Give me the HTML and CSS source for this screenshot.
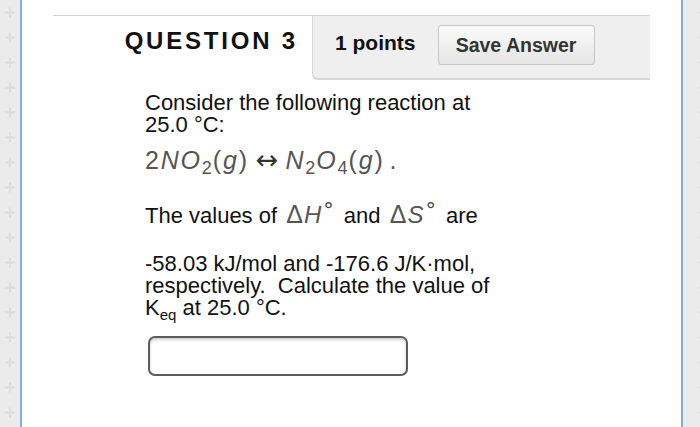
FILE: index.html
```html
<!DOCTYPE html>
<html lang="en">
<head>
<meta charset="utf-8">
<title>Question 3</title>
<link rel="stylesheet" href="styles.css">
</head>
<body>
<div class="page">
  <aside class="rail rail-left">
    <svg class="rail-marks" width="20" height="427" viewBox="0 0 20 427" aria-hidden="true">
      <defs>
        <pattern id="plus" x="0" y="0" width="20" height="25" patternUnits="userSpaceOnUse">
          <path d="M5 12.5h10M10 7.5v10" stroke="#dcdcdc" stroke-width="2" fill="none"/>
        </pattern>
      </defs>
      <rect width="20" height="427" fill="url(#plus)"/>
    </svg>
  </aside>
  <main class="content">
    <header class="qhead">
      <h2 class="qtitle">QUESTION 3</h2>
      <div class="qmeta">
        <span class="points">1 points</span>
        <button class="save" type="button">Save Answer</button>
      </div>
    </header>
    <section class="qbody">
      <p class="intro">Consider the following reaction at<br>25.0 °C:</p>
      <p class="eq"><span class="up">2</span><i>NO</i><sub>2</sub><span class="up">(</span><i>g</i><span class="up">)</span><span class="arrow">↔</span><i>N</i><sub>2</sub><i>O</i><sub>4</sub><span class="up">(</span><i>g</i><span class="up">)</span><span class="up dot">.</span></p>
      <p class="thermo">The values of <span class="m"><span class="delta">Δ</span><i>H</i><sup>°</sup></span> and <span class="m"><span class="delta">Δ</span><i>S</i><sup>°</sup></span> are</p>
      <p class="task">-58.03 kJ/mol and -176.6 J/K·mol,<br>respectively.&nbsp; Calculate the value of<br>K<sub class="keq">eq</sub> at 25.0 °C.</p>
      <input class="answer" type="text" aria-label="Answer">
    </section>
  </main>
  <aside class="rail rail-right">
    <svg class="rail-marks" width="18" height="427" viewBox="0 0 18 427" aria-hidden="true">
      <defs>
        <pattern id="dash" x="0" y="0" width="18" height="25" patternUnits="userSpaceOnUse">
          <path d="M14 12.5h4" stroke="#e2e2e2" stroke-width="2" fill="none"/>
        </pattern>
      </defs>
      <rect width="18" height="427" fill="url(#dash)"/>
    </svg>
  </aside>
</div>
</body>
</html>
```
FILE: styles.css
```css
* { box-sizing: border-box; }

html, body {
  margin: 0;
  padding: 0;
  background: #ffffff;
}

body {
  font-family: "Liberation Sans", Arial, Helvetica, sans-serif;
  color: #111;
}

.page {
  display: flex;
  width: 700px;
  height: 427px;
  overflow: hidden;
}

.rail {
  background: #ebebeb;
  flex: none;
}

.rail-left {
  width: 22px;
  border-right: 2px solid #7fb1dd;
}

.rail-right {
  width: 19px;
  border-left: 2px solid #7fb1dd;
}

.rail-marks {
  display: block;
}

.content {
  flex: 1;
  background: #fff;
}

/* header */
.qhead {
  display: flex;
  margin: 15px 0 0 31px;
  width: 597px;
  border-top: 1px solid #d2d2d2;
}

.qtitle {
  width: 259px;
  margin: 0;
  padding: 11px 14px 0 0;
  text-align: right;
  font-size: 24px;
  line-height: 28px;
  font-weight: bold;
  letter-spacing: 2.8px;
  color: #111;
}

.qmeta {
  flex: 1;
  display: flex;
  align-items: flex-start;
  gap: 22px;
  background: #efefef;
  border-left: 1px solid #d4d4d4;
  border-bottom: 2px solid #d6d6d6;
  border-bottom-left-radius: 6px;
  padding: 9px 0 13px 22px;
}

.points {
  margin-top: 6px;
  font-size: 21px;
  line-height: 24px;
  font-weight: bold;
  color: #111;
}

.save {
  width: 157px;
  height: 40px;
  padding: 0;
  font-family: "Liberation Sans", Arial, Helvetica, sans-serif;
  font-size: 19.5px;
  font-weight: bold;
  color: #333;
  background: linear-gradient(#fbfbfb, #e4e4e4);
  border: 1px solid #c6c6c6;
  border-radius: 3px;
}

/* body */
.qbody {
  padding: 12px 0 0 123px;
  font-size: 22px;
  line-height: 22px;
  color: #111;
}

.qbody p {
  margin: 0;
}

.eq {
  margin-top: 9px !important;
  font-size: 25px;
  line-height: 30px;
  letter-spacing: 1.8px;
  color: #555;
  white-space: nowrap;
}

.eq i {
  font-style: italic;
}

.eq sub {
  font-size: 18px;
  vertical-align: -5px;
  line-height: 0;
  letter-spacing: 0;
  margin-right: 1px;
}

.eq .arrow {
  font-family: "DejaVu Sans", sans-serif;
  font-size: 27px;
  line-height: 0;
  letter-spacing: 0;
  color: #333;
  margin: 0 7px 0 7px;
}

.eq .dot {
  margin-left: 5px;
}

.thermo {
  margin-top: 28px !important;
  white-space: nowrap;
}

.m {
  color: #555;
  margin: 0 4px 0 3px;
}

.m .delta {
  font-size: 25px;
  margin-right: 1px;
}

.m i {
  font-style: italic;
  font-size: 24px;
}

.m sup {
  font-family: "DejaVu Sans", sans-serif;
  font-size: 21px;
  line-height: 0;
  vertical-align: 5px;
  margin-left: 2px;
  color: #444;
}

.task {
  margin-top: 26px !important;
  white-space: nowrap;
}

.keq {
  font-size: 15px;
  line-height: 0;
  vertical-align: -5px;
}

.answer {
  display: block;
  margin-top: 17px;
  margin-left: 3px;
  width: 260px;
  height: 40px;
  border: 2px solid #5c5c5c;
  border-radius: 7px;
  background: #fff;
  box-shadow: inset 0 2px 3px rgba(0, 0, 0, 0.18);
}
```
